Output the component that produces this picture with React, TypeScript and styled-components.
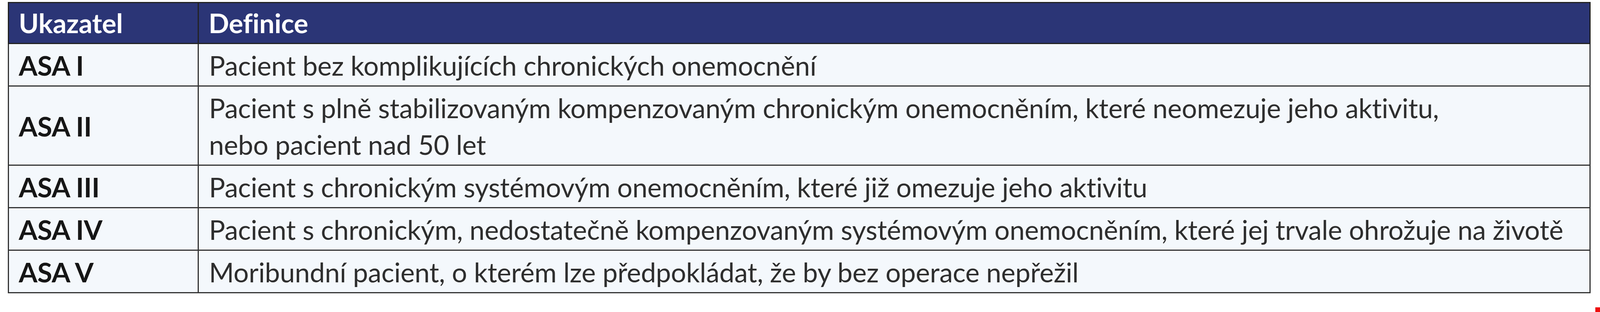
import React from 'react';
import styled, { createGlobalStyle } from 'styled-components';

const GlobalStyle = createGlobalStyle`
  html, body {
    margin: 0;
    padding: 0;
    background: #ffffff;
  }
  body {
    font-family: Lato, "Noto Sans", sans-serif;
    position: relative;
    height: 800px;
    overflow: hidden;
  }
`;

const Page = styled.div`
  padding: 5px 24px 0 20px;
`;

const Table = styled.table`
  width: 100%;
  table-layout: fixed;
  border-collapse: collapse;
  border: 3px solid #222222;
  font-size: 69px;
  line-height: 94px;
  letter-spacing: -0.2px;
`;

const HeadCell = styled.th`
  background: #2b3576;
  color: #ffffff;
  font-weight: 700;
  text-align: left;
  padding: 4px 25px 4px;
  border: 3px solid #222222;
`;

const LabelCell = styled.td`
  background: #f4f8fc;
  color: #161616;
  font-weight: 700;
  padding: 8px 25px 4px;
  border: 3px solid #333333;
  vertical-align: middle;
`;

const TextCell = styled.td`
  background: #f4f8fc;
  color: #2e2e2e;
  font-weight: 400;
  padding: 8px 25px 4px 26px;
  border: 3px solid #333333;
  vertical-align: middle;
`;

const Corner = styled.span`
  position: absolute;
  right: 0;
  bottom: 0;
  width: 12px;
  height: 12px;
  background: #ee1111;
`;

const rows: { label: string; lines: string[] }[] = [
  { label: 'ASA I', lines: ['Pacient bez komplikujících chronických onemocnění'] },
  {
    label: 'ASA II',
    lines: [
      'Pacient s plně stabilizovaným kompenzovaným chronickým onemocněním, které neomezuje jeho aktivitu,',
      'nebo pacient nad 50 let',
    ],
  },
  { label: 'ASA III', lines: ['Pacient s chronickým systémovým onemocněním, které již omezuje jeho aktivitu'] },
  {
    label: 'ASA IV',
    lines: ['Pacient s chronickým, nedostatečně kompenzovaným systémovým onemocněním, které jej trvale ohrožuje na životě'],
  },
  { label: 'ASA V', lines: ['Moribundní pacient, o kterém lze předpokládat, že by bez operace nepřežil'] },
];

const App: React.FC = () => (
  <>
    <GlobalStyle />
    <Page>
      <Table>
        <colgroup>
          <col style={{ width: 486 }} />
          <col />
        </colgroup>
        <thead>
          <tr>
            <HeadCell>Ukazatel</HeadCell>
            <HeadCell>Definice</HeadCell>
          </tr>
        </thead>
        <tbody>
          {rows.map(row => (
            <tr key={row.label}>
              <LabelCell>{row.label}</LabelCell>
              <TextCell>
                {row.lines.map((line, i) => (
                  <React.Fragment key={i}>
                    {i > 0 && <br />}
                    {line}
                  </React.Fragment>
                ))}
              </TextCell>
            </tr>
          ))}
        </tbody>
      </Table>
    </Page>
    <Corner />
  </>
);

export default App;
